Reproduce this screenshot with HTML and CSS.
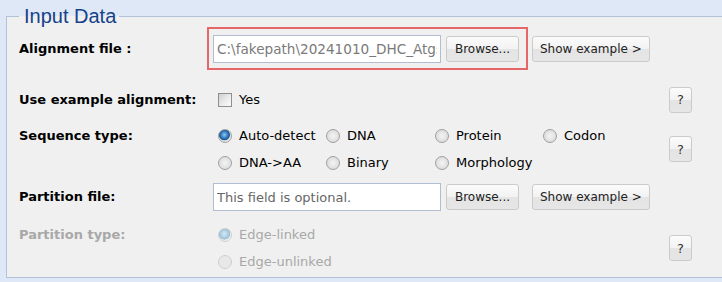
FILE: index.html
```html
<!DOCTYPE html>
<html lang="en">
<head>
  <meta charset="UTF-8" />
  <title>Input Data</title>
  <link rel="stylesheet" href="styles.css">
</head>
<body>
  <fieldset class="panel">
    <legend class="panel-title">Input Data</legend>

    <div class="form-row row-align">
      <label class="field-label">Alignment file :</label>
      <div class="field-value">
        <span class="highlight">
          <input class="text-input filled" type="text" value="C:\fakepath\20241010_DHC_Atgs_aligned.fasta" readonly>
          <button class="btn btn-browse" type="button">Browse...</button>
        </span>
        <button class="btn" type="button">Show example &gt;</button>
      </div>
      <span></span>
    </div>

    <div class="form-row row-example">
      <label class="field-label">Use example alignment:</label>
      <div class="field-value">
        <label class="choice"><input type="checkbox" class="check"> Yes</label>
      </div>
      <button class="btn btn-help" type="button">?</button>
    </div>

    <div class="form-row row-seq">
      <label class="field-label">Sequence type:</label>
      <div class="choice-grid">
        <label class="choice"><input type="radio" name="seq" class="radio" checked> Auto-detect</label>
        <label class="choice"><input type="radio" name="seq" class="radio"> DNA</label>
        <label class="choice"><input type="radio" name="seq" class="radio"> Protein</label>
        <label class="choice"><input type="radio" name="seq" class="radio"> Codon</label>
        <label class="choice"><input type="radio" name="seq" class="radio"> DNA-&gt;AA</label>
        <label class="choice"><input type="radio" name="seq" class="radio"> Binary</label>
        <label class="choice"><input type="radio" name="seq" class="radio"> Morphology</label>
      </div>
      <button class="btn btn-help" type="button">?</button>
    </div>

    <div class="form-row row-part">
      <label class="field-label">Partition file:</label>
      <div class="field-value">
        <input class="text-input" type="text" placeholder="This field is optional.">
        <button class="btn btn-browse btn-spaced" type="button">Browse...</button>
        <button class="btn" type="button">Show example &gt;</button>
      </div>
      <span></span>
    </div>

    <div class="form-row row-ptype disabled">
      <label class="field-label">Partition type:</label>
      <div class="choice-list">
        <label class="choice"><input type="radio" name="ptype" class="radio" checked disabled> Edge-linked</label>
        <label class="choice"><input type="radio" name="ptype" class="radio" disabled> Edge-unlinked</label>
      </div>
      <button class="btn btn-help" type="button">?</button>
    </div>
  </fieldset>
</body>
</html>
```

FILE: styles.css
```css
* {
  box-sizing: border-box;
}
body {
  margin: 0;
  background: #dfe8f6;
  overflow: hidden;
  font-family: 'DejaVu Sans', sans-serif;
  font-size: 13px;
  color: #000;
}
.panel {
  width: 760px;
  margin: 3px 0 0 6px;
  padding: 0 0 2px 12px;
  border: 1px solid #b4c2d9;
  background: #f0f0f0;
}
.panel-title {
  padding: 0 3px 0 5px;
  font-family: 'Liberation Sans', sans-serif;
  font-size: 20px;
  line-height: 26px;
  color: #15428b;
}
.form-row {
  display: grid;
  grid-template-columns: 194px 456px 23px;
  align-items: center;
}
.field-label {
  align-self: start;
  font-weight: bold;
  line-height: 27px;
}
.row-align {
  padding: 6px 0 23px;
}
.row-align .field-label,
.row-part .field-label {
  line-height: 28px;
}
.row-seq {
  padding-top: 9px;
}
.row-part {
  padding-top: 7px;
}
.row-ptype {
  padding-top: 10px;
}
.field-value {
  display: flex;
  align-items: center;
}
.highlight {
  display: inline-flex;
  align-items: center;
  margin: -8px 4px -7px -6px;
  padding: 6px 7px 5px 4px;
  border: 2px solid #e56767;
}
.text-input {
  width: 228px;
  height: 28px;
  margin-right: 5px;
  padding: 0 3px;
  border: 1px solid #b1bdd2;
  background: #fff;
  font-family: 'DejaVu Sans', sans-serif;
  font-size: 13px;
  color: #777;
  outline: none;
}
.text-input.filled {
  font-size: 13.6px;
  color: #7a7a7a;
}
.text-input::placeholder {
  color: #666;
}
.btn {
  height: 26px;
  padding: 0 7px;
  border: 1px solid #cbcbcb;
  border-radius: 3px;
  background: linear-gradient(#fbfbfb, #f2f2f2 50%, #e4e4e4 50%, #e6e6e6);
  font-family: 'DejaVu Sans', sans-serif;
  font-size: 12px;
  color: #222;
}
.btn-browse {
  width: 73px;
  padding: 0;
}
.btn-spaced {
  margin-right: 13px;
}
.btn-help {
  width: 23px;
  padding: 0;
  font-size: 13px;
  color: #333;
}
.choice {
  display: flex;
  align-items: center;
  height: 27px;
  white-space: nowrap;
}
.choice-grid {
  display: grid;
  grid-template-columns: 108px 109px 108px 108px;
}
.check,
.radio {
  appearance: none;
  width: 14px;
  height: 14px;
  margin: 0 7px 0 5px;
  border: 1px solid #8f8f8f;
}
.check {
  border-radius: 0;
  background: linear-gradient(135deg, #cfcfcf, #eeeeee 60%, #fafafa);
}
.radio {
  border-radius: 50%;
  border-color: #a0a0a0;
  background: radial-gradient(circle at 50% 50%, #f4f4f4 0, #dcdcdc 75%);
}
.radio:checked {
  background: radial-gradient(circle at 45% 40%, #8fc8f0 0, #2a70b6 40%, #17548f 52%, #e0e0e0 60%, #f4f4f4 100%);
}
.disabled {
  color: #a8a8a8;
}
.disabled .field-label {
  color: #a8a8a8;
}
.disabled .radio {
  border-color: #cfcfcf;
  background: #e8e8e8;
}
.disabled .radio:checked {
  background: radial-gradient(circle at 45% 40%, #d4e8f4 0, #a6c8de 45%, #9bbcd2 55%, #ececec 62%, #f2f2f2 100%);
}
```
